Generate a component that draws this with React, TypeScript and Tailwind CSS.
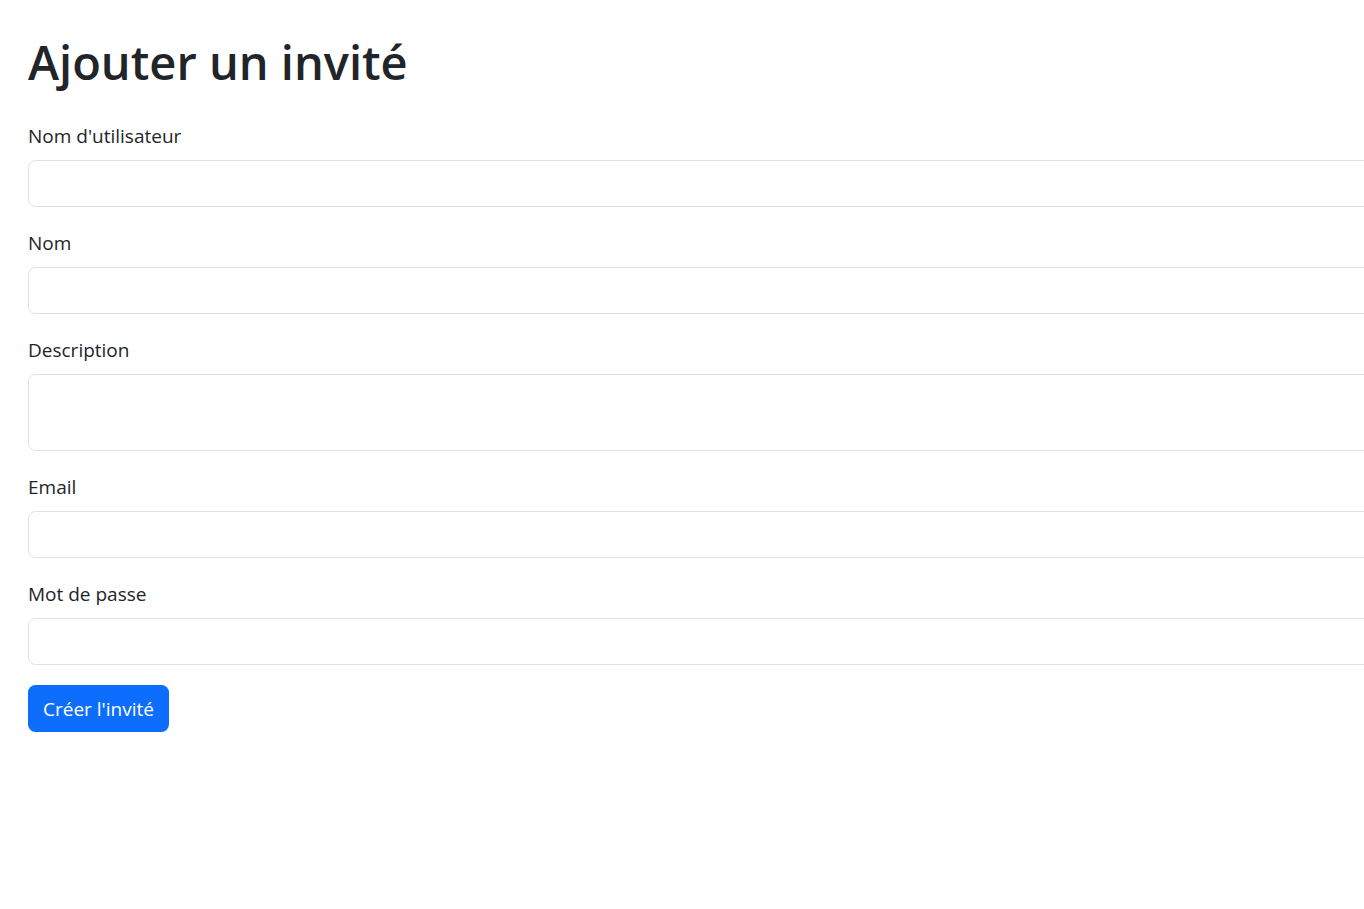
const fields = [
  { label: "Nom d'utilisateur", type: 'text' },
  { label: 'Nom', type: 'text' },
  { label: 'Description', type: 'textarea' },
  { label: 'Email', type: 'email' },
  { label: 'Mot de passe', type: 'password' },
]

export default function App() {
  return (
    <main
      className="min-h-screen w-full overflow-hidden bg-white pt-[32px] pl-[28px] text-[#212529]"
      style={{ fontFamily: '"Open Sans", "Noto Sans", sans-serif' }}
    >
      <h1 className="mb-[28px] text-[47px] font-semibold leading-[60px]">Ajouter un invité</h1>

      <form>
        {fields.map((f) => (
          <div key={f.label} className="mb-[20px]">
            <label className="mb-[9px] block pt-[1px] text-[19px] leading-[30px]">{f.label}</label>
            {f.type === 'textarea' ? (
              <textarea
                rows={2}
                className="block h-[77px] w-[1400px] resize-none rounded-[7.5px] border border-[#dee2e6] bg-white"
              />
            ) : (
              <input
                type={f.type}
                className="block h-[47px] w-[1400px] rounded-[7.5px] border border-[#dee2e6] bg-white"
              />
            )}
          </div>
        ))}

        <button
          type="submit"
          className="h-[47px] rounded-[7.5px] bg-[#0d6efd] px-[15px] text-[19px] leading-[30px] text-white"
        >
          Créer l'invité
        </button>
      </form>
    </main>
  )
}
